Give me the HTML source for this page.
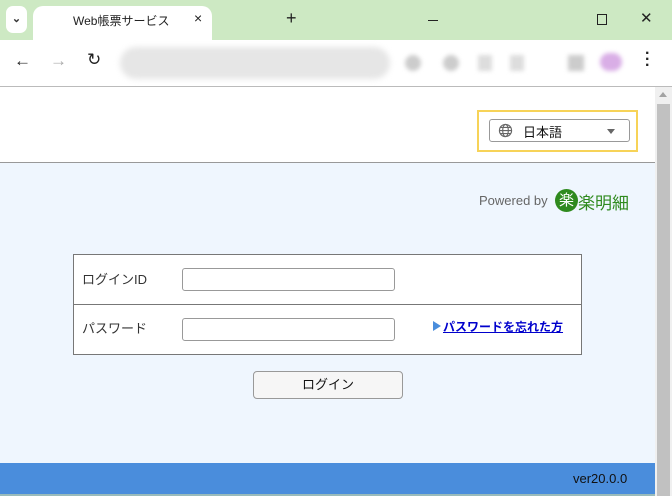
<!DOCTYPE html><html><head><meta charset="utf-8"><style>
*{box-sizing:border-box;margin:0;padding:0}
body{width:672px;height:496px;overflow:hidden;position:relative;background:#fff;font-family:"Liberation Sans","Noto Sans CJK JP",sans-serif;font-size:13px;color:#333}
.a{position:absolute}
</style></head><body>
<div class="a" style="left:0;top:0;width:672px;height:40px;background:#cde9c3"></div>
<div class="a" style="left:6px;top:6px;width:21px;height:27px;background:#fff;border-radius:7px;text-align:center;line-height:26px;font-size:11px;font-weight:bold">⌄</div>
<div class="a" style="left:33px;top:6px;width:179px;height:36px;background:#fff;border-radius:10px 10px 0 0"></div>
<div class="a" style="left:73px;top:12px;font-size:12px;color:#222">Web帳票サービス</div>
<div class="a" style="left:194px;top:10px;font-size:14px;color:#222">×</div>
<div class="a" style="left:286px;top:8px;font-size:18px;color:#222">+</div>
<div class="a" style="left:428px;top:20px;width:10px;height:1.3px;background:#222"></div>
<div class="a" style="left:597px;top:14px;width:10px;height:11px;border:1.3px solid #222"></div>
<div class="a" style="left:640px;top:9px;font-size:15px;color:#222">✕</div>
<div class="a" style="left:0;top:40px;width:672px;height:46px;background:#fff;border-radius:8px 8px 0 0"></div>
<div class="a" style="left:14px;top:51px;font-size:17px;color:#222">←</div>
<div class="a" style="left:50px;top:51px;font-size:17px;color:#aaa">→</div>
<div class="a" style="left:87px;top:50px;font-size:17px;color:#222">↻</div>
<div class="a" style="left:120px;top:47px;width:270px;height:32px;background:#e6e6e6;border-radius:16px;filter:blur(3px)"></div>
<div class="a" style="left:405px;top:55px;width:16px;height:16px;background:#ccc;border-radius:8px;filter:blur(2px)"></div>
<div class="a" style="left:443px;top:55px;width:16px;height:16px;background:#ccc;border-radius:8px;filter:blur(2px)"></div>
<div class="a" style="left:478px;top:55px;width:14px;height:16px;background:#ddd;filter:blur(2px)"></div>
<div class="a" style="left:510px;top:55px;width:14px;height:16px;background:#ddd;filter:blur(2px)"></div>
<div class="a" style="left:568px;top:55px;width:16px;height:16px;background:#ccc;filter:blur(2px)"></div>
<div class="a" style="left:600px;top:53px;width:22px;height:18px;background:#d9aee6;border-radius:9px;filter:blur(2px)"></div>
<div class="a" style="left:645px;top:51px;font-size:16px;font-weight:bold;color:#222;line-height:6px">·<br>·<br>·</div>
<div class="a" style="left:0;top:86px;width:672px;height:1px;background:#bbb"></div>
<div class="a" style="left:0;top:162px;width:655px;height:301px;background:#eff6fe;border-top:1px solid #999"></div>
<div class="a" style="left:655px;top:87px;width:17px;height:409px;background:#f0f0f0"></div>
<div class="a" style="left:657px;top:104px;width:13px;height:392px;background:#c1c1c1"></div>
<div class="a" style="left:659px;top:92px;width:0;height:0;border:4px solid transparent;border-bottom:5px solid #a3a3a3;border-top:0"></div>
<div class="a" style="left:477px;top:110px;width:161px;height:42px;border:2px solid #f7d358"></div>
<div class="a" style="left:489px;top:119px;width:141px;height:23px;border:1px solid #999;border-radius:3px;background:#fff"></div>
<svg class="a" style="left:498px;top:123px" width="15" height="15" viewBox="0 0 16 16" fill="none" stroke="#666" stroke-width="1.2"><circle cx="8" cy="8" r="6.5"/><ellipse cx="8" cy="8" rx="3" ry="6.5"/><path d="M1.5 8h13M2.5 4.7h11M2.5 11.3h11"/></svg>
<div class="a" style="left:523px;top:122px;font-size:13px;color:#111">日本語</div>
<div class="a" style="left:607px;top:129px;border:4px solid transparent;border-top:5px solid #666;border-bottom:0"></div>
<div class="a" style="left:479px;top:193px;font-size:13px;color:#666">Powered by</div>
<div class="a" style="left:555px;top:189px;width:23px;height:23px;border-radius:12px;background:#2f8a1e;color:#fff;font-size:15px;text-align:center;line-height:23px">楽</div>
<div class="a" style="left:578px;top:189px;font-size:17px;color:#2f8a1e;letter-spacing:0">楽明細</div>
<div class="a" style="left:73px;top:254px;width:509px;height:101px;border:1px solid #777;background:#fff"></div>
<div class="a" style="left:73px;top:304px;width:509px;height:1px;background:#777"></div>
<div class="a" style="left:82px;top:269px;color:#333">ログインID</div>
<div class="a" style="left:82px;top:318px;color:#333">パスワード</div>
<div class="a" style="left:182px;top:268px;width:213px;height:23px;border:1px solid #999;border-radius:3px"></div>
<div class="a" style="left:182px;top:318px;width:213px;height:23px;border:1px solid #999;border-radius:3px"></div>
<div class="a" style="left:433px;top:321px;border:5px solid transparent;border-left:8px solid #4a8ddc;border-right:0"></div>
<div class="a" style="left:443px;top:318px;color:#00c;text-decoration:underline;font-weight:bold;font-size:12px">パスワードを忘れた方</div>
<div class="a" style="left:253px;top:371px;width:150px;height:28px;border:1px solid #999;border-radius:4px;background:#f6f6f6;text-align:center;line-height:26px;color:#111">ログイン</div>
<div class="a" style="left:0;top:463px;width:655px;height:31px;background:#4a8ddc"></div>
<div class="a" style="left:0;top:494px;width:655px;height:2px;background:#9bb"></div>
<div class="a" style="left:573px;top:471px;color:#111;font-size:13px">ver20.0.0</div>
</body></html>
